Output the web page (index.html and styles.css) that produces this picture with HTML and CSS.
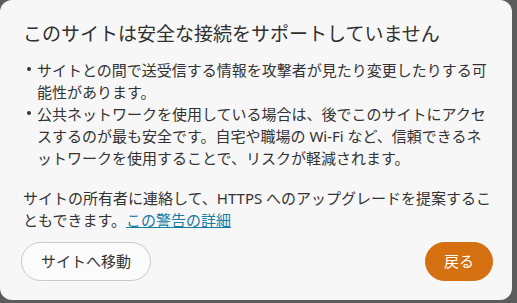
FILE: index.html
```html
<!DOCTYPE html>
<html lang="ja">
<head>
<meta charset="utf-8">
<link rel="stylesheet" href="styles.css">
</head>
<body>
<div class="dialog">
  <h1 class="title">このサイトは安全な接続をサポートしていません</h1>
  <ul class="points">
    <li>サイトとの間で送受信する情報を攻撃者が見たり変更したりする可能性があります。</li>
    <li>公共ネットワークを使用している場合は、後でこのサイトにアクセスするのが最も安全です。自宅や職場の Wi-Fi など、信頼できるネ<br>ットワークを使用することで、リスクが軽減されます。</li>
  </ul>
  <p class="note">サイトの所有者に連絡して、HTTPS へのアップグレードを提案することもできます。<a class="link" href="#">この警告の詳細</a></p>
  <div class="actions">
    <button class="btn btn-secondary">サイトへ移動</button>
    <button class="btn btn-primary">戻る</button>
  </div>
</div>
</body>
</html>
```
FILE: styles.css
```css
html, body {
  margin: 0;
  padding: 0;
}
body {
  background: #5c5c5c;
  width: 517px;
  height: 303px;
  overflow: hidden;
  font-family: "Noto Sans", "Noto Sans CJK JP", sans-serif;
  color: #333333;
}
.dialog {
  box-sizing: border-box;
  width: 512px;
  height: 300px;
  background: #f7f7f7;
  border-radius: 12px;
  padding: 20px 12px 0 23px;
  display: flex;
  flex-direction: column;
}
.title {
  margin: 0;
  font-size: 19px;
  line-height: 28px;
  font-weight: 400;
  color: #303030;
}
.points {
  list-style: none;
  margin: 11px 0 0 0;
  padding: 0;
  font-size: 15px;
  line-height: 22px;
}
.points li {
  position: relative;
  padding-left: 14px;
}
.points li::before {
  content: "";
  position: absolute;
  left: 4px;
  top: 8px;
  width: 4px;
  height: 4px;
  border-radius: 50%;
  background: #333333;
}
.note {
  margin: 18px 0 0 0;
  font-size: 15px;
  line-height: 22px;
}
.link {
  color: #1a7aa6;
  text-decoration: underline;
}
.actions {
  margin-top: 11px;
  display: flex;
  justify-content: space-between;
  padding-right: 7px;
}
.btn {
  font-family: "Noto Sans", "Noto Sans CJK JP", sans-serif;
  font-size: 15px;
  height: 39px;
  border-radius: 20px;
  padding: 0 18px;
  line-height: 37px;
}
.btn-secondary {
  margin-left: -2px;
  background: #fbfbfb;
  border: 1px solid #c9c9c9;
  color: #333333;
  padding: 0 19px;
}
.btn-primary {
  background: #d57010;
  border: 1px solid #d57010;
  color: #ffffff;
}
```
